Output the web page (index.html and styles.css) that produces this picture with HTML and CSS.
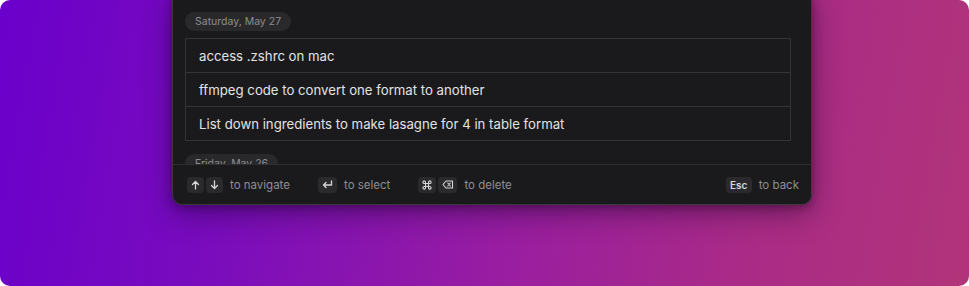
FILE: index.html
```html
<!DOCTYPE html>
<html>
<head>
<meta charset="utf-8">
<link rel="stylesheet" href="styles.css">
</head>
<body>
<div class="stage">
  <div class="panel">
    <div class="scroll">
      <div class="pill">Saturday, May 27</div>
      <div class="list">
        <div class="row">access .zshrc on mac</div>
        <div class="row">ffmpeg code to convert one format to another</div>
        <div class="row">List down ingredients to make lasagne for 4 in table format</div>
      </div>
      <div class="pill pill-next">Friday, May 26</div>
    </div>
    <div class="footer">
      <div class="hint">
        <span class="key"><svg width="9" height="10" viewBox="0 0 9 10"><path d="M4.5 9V1.5M1.5 4.5l3-3 3 3" fill="none" stroke="#d6d6d6" stroke-width="1.3" stroke-linecap="round" stroke-linejoin="round"/></svg></span>
        <span class="key"><svg width="9" height="10" viewBox="0 0 9 10"><path d="M4.5 1v7.5M1.5 5.5l3 3 3-3" fill="none" stroke="#d6d6d6" stroke-width="1.3" stroke-linecap="round" stroke-linejoin="round"/></svg></span>
        <span class="label">to navigate</span>
      </div>
      <div class="hint">
        <span class="key key-wide"><svg width="11" height="9" viewBox="0 0 11 9"><path d="M9.5 1v4H1.5M4 2.5L1.5 5 4 7.5" fill="none" stroke="#d6d6d6" stroke-width="1.3" stroke-linecap="round" stroke-linejoin="round"/></svg></span>
        <span class="label">to select</span>
      </div>
      <div class="hint">
        <span class="key key-mid"><svg width="10" height="10" viewBox="0 0 10 10"><path d="M3.5 3.5h3v3h-3zM3.5 3.5V2.2A1.3 1.3 0 1 0 2.2 3.5H3.5M6.5 3.5V2.2A1.3 1.3 0 1 1 7.8 3.5H6.5M3.5 6.5v1.3A1.3 1.3 0 1 1 2.2 6.5H3.5M6.5 6.5v1.3A1.3 1.3 0 1 0 7.8 6.5H6.5" fill="none" stroke="#d6d6d6" stroke-width="1.1"/></svg></span>
        <span class="key key-wide"><svg width="12" height="9" viewBox="0 0 12 9"><path d="M4 1h6.5v7H4L1 4.5z" fill="none" stroke="#d6d6d6" stroke-width="1.1" stroke-linejoin="round"/><path d="M5.8 3l2.6 3M8.4 3L5.8 6" stroke="#d6d6d6" stroke-width="1.1" stroke-linecap="round"/></svg></span>
        <span class="label">to delete</span>
      </div>
      <div class="spacer"></div>
      <div class="hint">
        <span class="key key-esc">Esc</span>
        <span class="label">to back</span>
      </div>
    </div>
  </div>
</div>
</body>
</html>
```
FILE: styles.css
```css
html, body {
  margin: 0;
  padding: 0;
  background: #ffffff;
}
body {
  font-family: Inter, "Noto Sans", sans-serif;
  width: 969px;
  height: 286px;
  overflow: hidden;
}
.stage {
  width: 969px;
  height: 286px;
  border-radius: 10px;
  overflow: hidden;
  background: linear-gradient(100deg, #6a00cb 0%, #7a0cbd 25%, #9a1ea0 55%, #aa2b86 78%, #b1347a 100%);
  display: flex;
  align-items: flex-start;
  padding-left: 172px;
  box-sizing: border-box;
}
.panel {
  margin-top: -10px;
  width: 640px;
  box-sizing: border-box;
  background: #1a1a1c;
  border: 1px solid #3b3b3e;
  border-radius: 10px;
  box-shadow: 0 8px 30px rgba(20, 0, 40, 0.45), 0 2px 8px rgba(0, 0, 0, 0.3);
  display: flex;
  flex-direction: column;
  overflow: hidden;
}
.scroll {
  height: 173px;
  overflow: hidden;
  padding: 21px 20px 0 12px;
  box-sizing: border-box;
  display: flex;
  flex-direction: column;
  align-items: flex-start;
}
.pill {
  flex: none;
  display: flex;
  align-items: center;
  height: 19px;
  padding: 0 10px;
  border-radius: 10px;
  background: #29292b;
  color: #8c8c90;
  font-size: 10.5px;
}
.list {
  align-self: stretch;
  margin-top: 7px;
  border: 1px solid #343437;
}
.row {
  height: 33px;
  display: flex;
  align-items: center;
  padding-left: 13px;
  color: #e2e2e4;
  font-size: 13.2px;
}
.row + .row {
  border-top: 1px solid #343437;
}
.pill-next {
  margin-top: 13px;
}
.footer {
  height: 39px;
  border-top: 1px solid #2e2e31;
  display: flex;
  align-items: center;
  padding: 0 12px 0 14px;
  gap: 28px;
}
.hint {
  display: flex;
  align-items: center;
  gap: 2px;
}
.label {
  margin-left: 5px;
  color: #8e8e92;
  font-size: 11.5px;
}
.key {
  width: 17px;
  height: 16px;
  border-radius: 4px;
  background: #2a2a2d;
  display: flex;
  align-items: center;
  justify-content: center;
  color: #d6d6d6;
  font-size: 10px;
  font-weight: 600;
}
.key-wide {
  width: 19px;
}
.key-mid {
  width: 18px;
}
.key-esc {
  width: 26px;
}
.spacer {
  flex: 1;
}
```
